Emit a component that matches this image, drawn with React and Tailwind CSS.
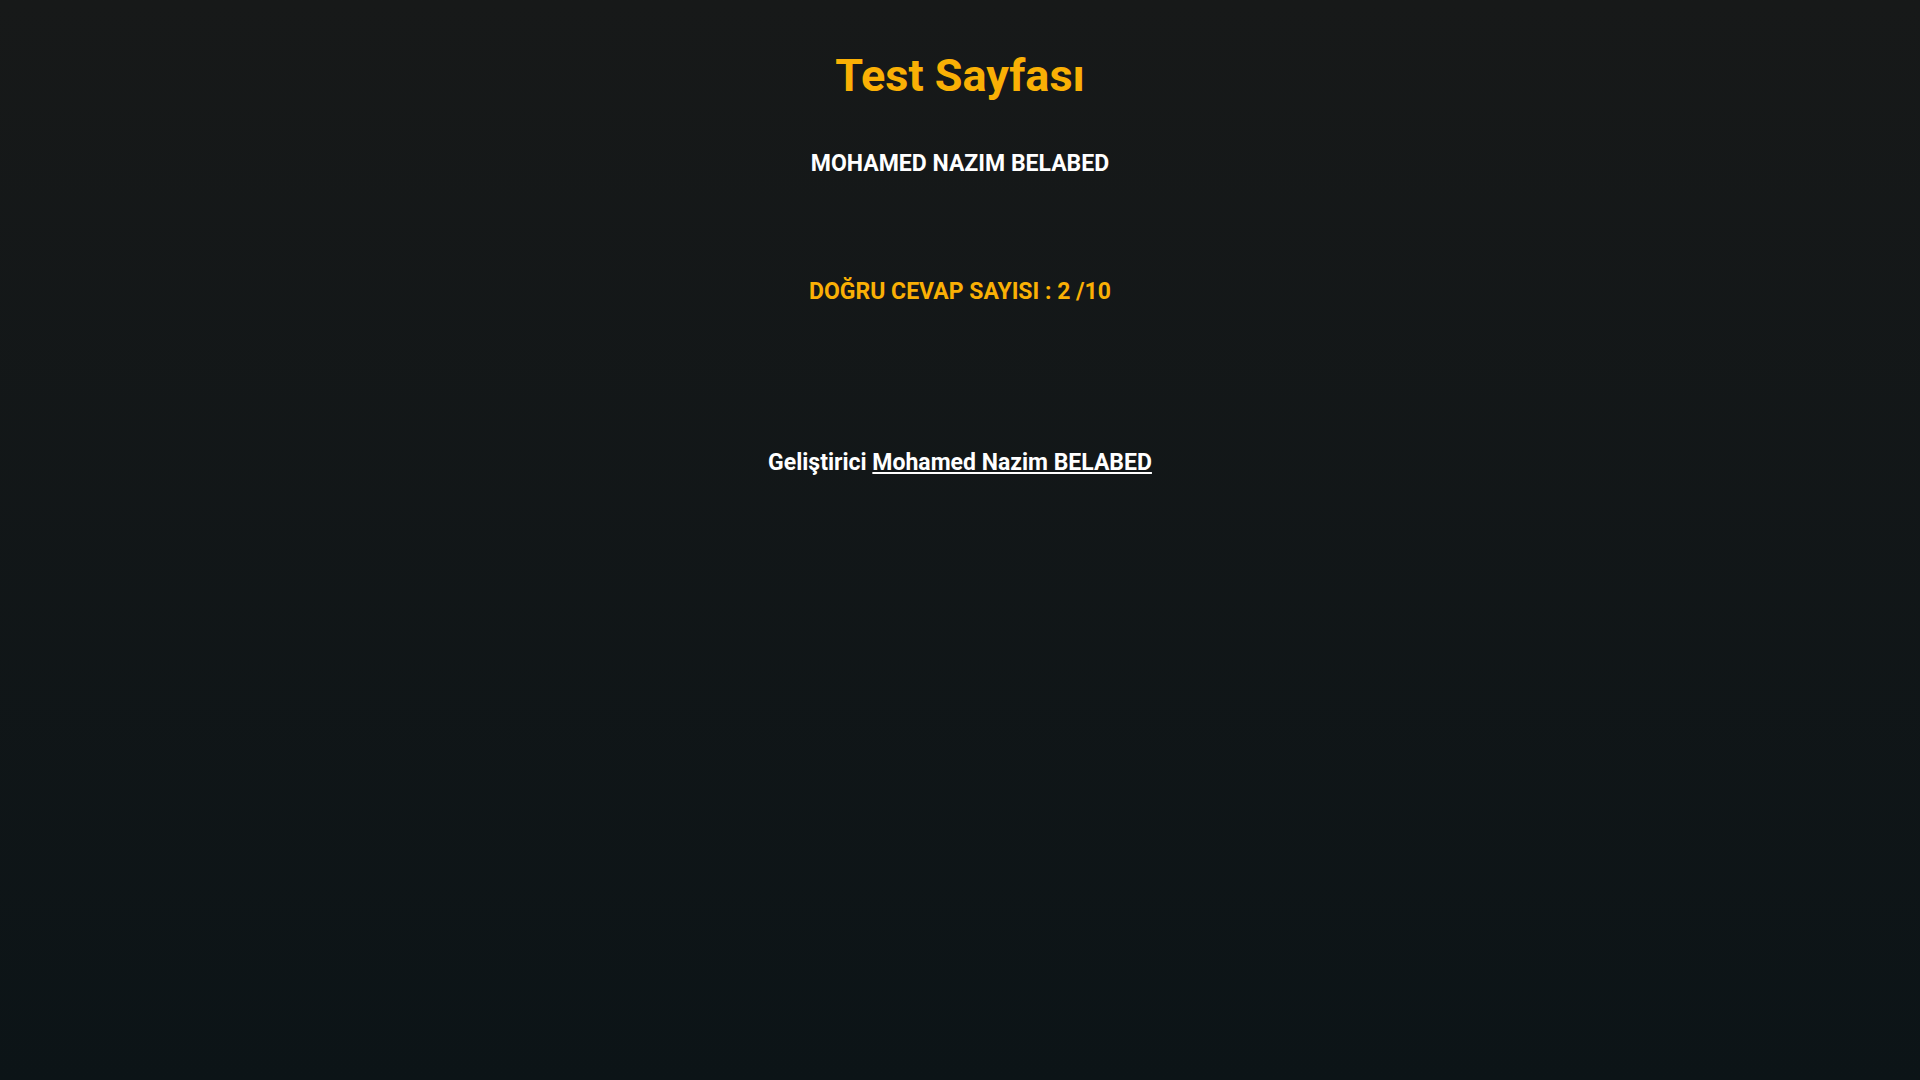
export default function App() {
  return (
    <div className="min-h-screen w-full bg-gradient-to-b from-[#171919] to-[#0c1417] text-center font-['Roboto',sans-serif]">
      <div className="flex flex-col items-center pt-[50px]">
        <h1 className="text-[45px] font-bold leading-[52px] text-[#fab005]">Test Sayfası</h1>
        <h2 className="mt-[48px] text-[23px] font-bold leading-7 text-white">MOHAMED NAZIM BELABED</h2>
        <p className="mt-[100px] text-[23px] font-bold leading-7 text-[#fab005]">DOĞRU CEVAP SAYISI : 2 /10</p>
        <p className="mt-[143px] text-[23px] font-bold leading-7 text-white">
          Geliştirici{' '}
          <a href="#" className="underline">Mohamed Nazim BELABED</a>
        </p>
      </div>
    </div>
  )
}
